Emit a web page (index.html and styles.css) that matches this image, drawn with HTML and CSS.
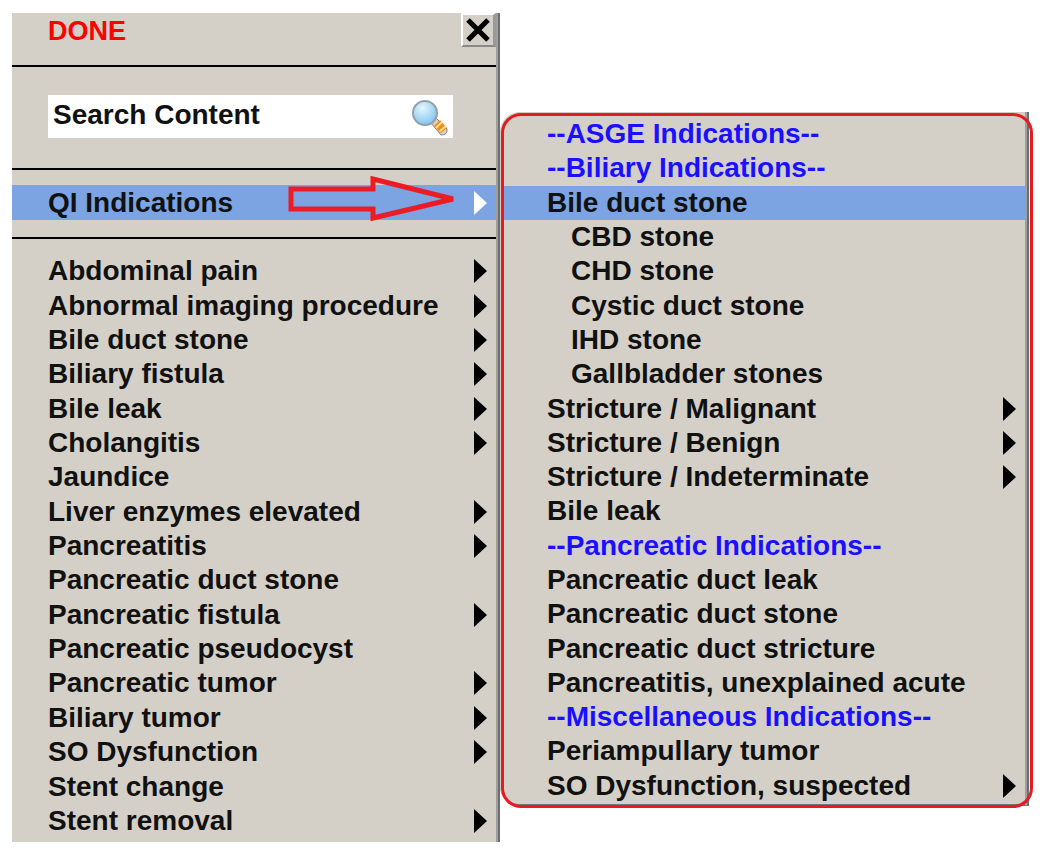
FILE: index.html
```html
<!DOCTYPE html>
<html lang="en">
<head>
  <meta charset="UTF-8">
  <title>Indications</title>
  <link rel="stylesheet" href="styles.css">
</head>
<body>
  <nav class="menu">
    <div class="menu-head">
      <button class="done">DONE</button>
      <button class="close" aria-label="Close">
        <svg width="24" height="24" viewBox="0 0 24 24"><path d="M2 2l20 20M22 2L2 22" stroke="#000" stroke-width="5"/></svg>
      </button>
    </div>

    <div class="search">
      <input type="text" id="search" aria-label="Search Content" value="Search Content">
      <svg class="glass" width="38" height="38" viewBox="0 0 38 38">
        <defs>
          <radialGradient id="lens" cx="40%" cy="30%" r="70%">
            <stop offset="0" stop-color="#e4f6fd"/>
            <stop offset="1" stop-color="#83c6ee"/>
          </radialGradient>
        </defs>
        <path d="M19 23l5-5 11 11q1 6-6 6z" fill="#d8d2c8" stroke="#8a837b"/>
        <path d="M22 26l6-6 7 8-6 5z" fill="#f58a1f"/>
        <path d="M24 28l6-6M28 31l6-5" stroke="#ffe08a" stroke-width="2"/>
        <circle cx="13" cy="13" r="12" fill="url(#lens)" stroke="#93a0ac" stroke-width="2"/>
      </svg>
    </div>

    <div class="current">
      <button class="item sub active">QI Indications</button>
      <svg class="pointer" width="172" height="48" viewBox="0 0 172 48">
        <path d="M6 14H88V4L168 24 88 43V34H6z" fill="none" stroke="#ed1c24" stroke-width="5"/>
      </svg>
    </div>

    <ul class="list main-list">
      <li><button class="item sub">Abdominal pain</button></li>
      <li><button class="item sub">Abnormal imaging procedure</button></li>
      <li><button class="item sub">Bile duct stone</button></li>
      <li><button class="item sub">Biliary fistula</button></li>
      <li><button class="item sub">Bile leak</button></li>
      <li><button class="item sub">Cholangitis</button></li>
      <li><button class="item">Jaundice</button></li>
      <li><button class="item sub">Liver enzymes elevated</button></li>
      <li><button class="item sub">Pancreatitis</button></li>
      <li><button class="item">Pancreatic duct stone</button></li>
      <li><button class="item sub">Pancreatic fistula</button></li>
      <li><button class="item">Pancreatic pseudocyst</button></li>
      <li><button class="item sub">Pancreatic tumor</button></li>
      <li><button class="item sub">Biliary tumor</button></li>
      <li><button class="item sub">SO Dysfunction</button></li>
      <li><button class="item">Stent change</button></li>
      <li><button class="item sub">Stent removal</button></li>
    </ul>
  </nav>

  <nav class="submenu">
    <ul class="list sub-list">
      <li class="group">--ASGE Indications--</li>
      <li class="group">--Biliary Indications--</li>
      <li><button class="item active">Bile duct stone</button></li>
      <li><button class="item nested">CBD stone</button></li>
      <li><button class="item nested">CHD stone</button></li>
      <li><button class="item nested">Cystic duct stone</button></li>
      <li><button class="item nested">IHD stone</button></li>
      <li><button class="item nested">Gallbladder stones</button></li>
      <li><button class="item sub">Stricture / Malignant</button></li>
      <li><button class="item sub">Stricture / Benign</button></li>
      <li><button class="item sub">Stricture / Indeterminate</button></li>
      <li><button class="item">Bile leak</button></li>
      <li class="group">--Pancreatic Indications--</li>
      <li><button class="item">Pancreatic duct leak</button></li>
      <li><button class="item">Pancreatic duct stone</button></li>
      <li><button class="item">Pancreatic duct stricture</button></li>
      <li><button class="item">Pancreatitis, unexplained acute</button></li>
      <li class="group">--Miscellaneous Indications--</li>
      <li><button class="item">Periampullary tumor</button></li>
      <li><button class="item sub">SO Dysfunction, suspected</button></li>
    </ul>
  </nav>
</body>
</html>
```

FILE: styles.css
```css
* {
  box-sizing: border-box;
}

body {
  margin: 0;
  padding: 13px 21px 16px 12px;
  display: flex;
  align-items: flex-start;
  background: #fff;
  color: #111;
  font: bold 28px/34px "Liberation Sans", Arial, sans-serif;
}

button,
input {
  font: inherit;
  color: inherit;
  border: none;
  padding: 0;
}

.menu,
.submenu {
  background: #d4d0c8;
  border-right: 2px solid #a09e9a;
  box-shadow: 2px 0 #6e6e6e;
}

.menu {
  flex: 1 1 486px;
  margin-right: 2px;
}

.menu-head {
  display: flex;
  justify-content: space-between;
  align-items: flex-start;
  height: 54px;
  padding-left: 36px;
  border-bottom: 2px solid #000;
}

.done {
  background: none;
  color: #f00;
  font-size: 27px;
  line-height: 36px;
}

.close {
  display: flex;
  align-items: center;
  justify-content: center;
  width: 35px;
  height: 34px;
  background: #d4d0c8;
  border: 2px solid #fff;
  border-right: 3px solid #999;
  border-bottom-color: #888;
}

.search {
  position: relative;
  padding: 28px 43px 30px 36px;
  border-bottom: 2px solid #000;
}

.search input {
  display: block;
  width: 100%;
  height: 43px;
  padding: 0 48px 3px 5px;
  background: #fff;
}

.glass {
  position: absolute;
  right: 46px;
  top: 33px;
}

.current {
  position: relative;
  padding: 15px 0 17px;
  border-bottom: 2px solid #000;
}

.pointer {
  position: absolute;
  left: 273px;
  top: 5px;
}

.list {
  display: flex;
  flex-direction: column;
  margin: 0;
  padding: 0;
  list-style: none;
}

.list li {
  flex: 1;
  display: flex;
  align-items: center;
}

.main-list {
  min-height: 584px;
  margin: 15px 0 4px;
}

.sub-list {
  min-height: 686px;
}

.item {
  display: flex;
  align-items: center;
  justify-content: space-between;
  width: 100%;
  height: 34px;
  padding: 0 9px 0 36px;
  background: none;
  text-align: left;
  white-space: nowrap;
}

.current .item {
  height: 35px;
}

.item.sub::after {
  content: "";
  border: solid transparent;
  border-width: 12px 0 12px 13px;
  border-left-color: #000;
}

.item.active {
  background: #7ca3e2;
}

.item.sub.active::after {
  border-left-color: #fff;
}

.submenu {
  position: relative;
  flex: 1 1 527px;
  margin: 99px 2px 0 0;
  padding: 5px 0 1px 4px;
  border-bottom: 2px solid #777;
  border-radius: 20px 0 0 20px;
}

/* red frame round the open submenu */
.submenu::after {
  content: "";
  position: absolute;
  top: 1px;
  right: -8px;
  bottom: -4px;
  left: 1px;
  border: 3px solid #e51b24;
  border-radius: 20px;
  pointer-events: none;
}

.submenu .item,
.group {
  padding-left: 43px;
}

.submenu .item.nested {
  padding-left: 67px;
}

.group {
  color: #1a10ff;
}
```
